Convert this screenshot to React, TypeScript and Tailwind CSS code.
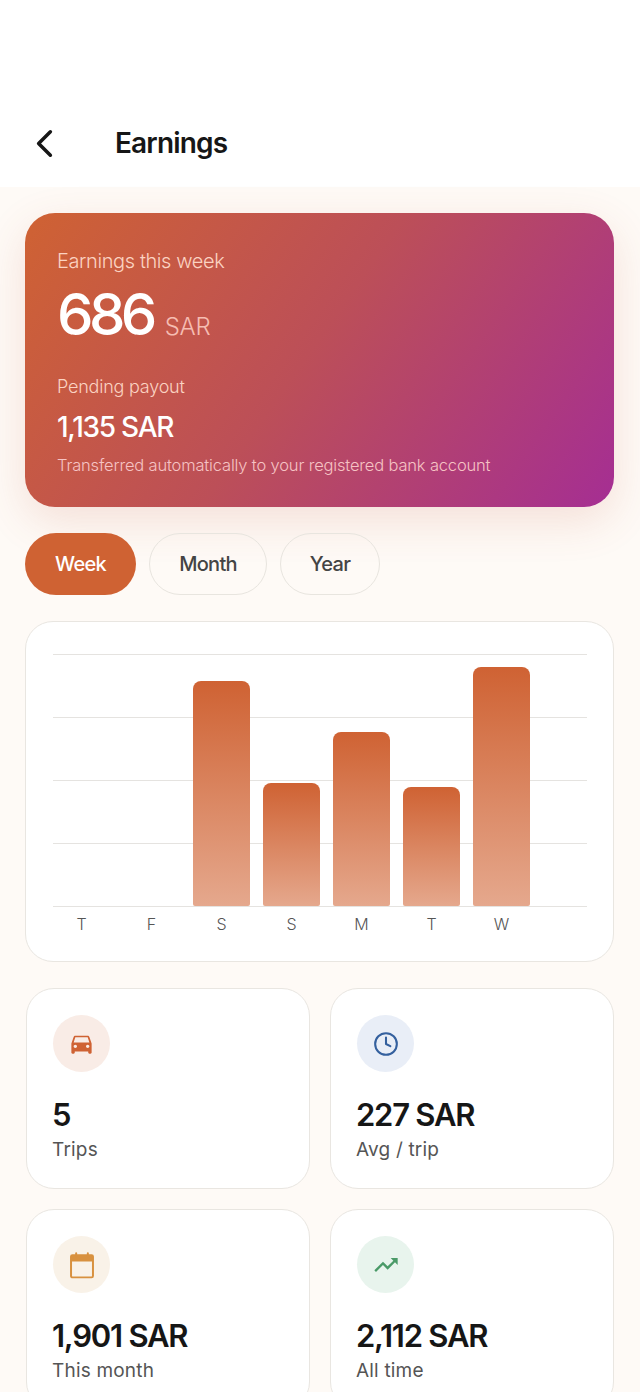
import { ChevronLeft, Clock } from 'lucide-react'
import { MdDirectionsCar, MdTrendingUp } from 'react-icons/md'

const days = [
  { label: 'T', height: 0 },
  { label: 'F', height: 0 },
  { label: 'S', height: 225 },
  { label: 'S', height: 123 },
  { label: 'M', height: 174 },
  { label: 'T', height: 119 },
  { label: 'W', height: 239 },
]

function CalendarIcon() {
  return (
    <svg viewBox="0 0 24 24" className="h-[28px] w-[28px]" fill="none">
      <rect x="2.6" y="3.6" width="18.8" height="19" rx="1.2" stroke="#d8913f" strokeWidth="1.7" />
      <path d="M2.6 4.8A1.2 1.2 0 0 1 3.8 3.6h16.4a1.2 1.2 0 0 1 1.2 1.2V9H2.6z" fill="#d8913f" />
      <path d="M7 2v2.5M17 2v2.5" stroke="#d8913f" strokeWidth="1.7" strokeLinecap="round" />
    </svg>
  )
}

function StatCard({ icon, tint, value, label }: { icon: React.ReactNode; tint: string; value: string; label: string }) {
  return (
    <div className="h-[201px] rounded-[28px] border border-[#e9e6e1] bg-white px-[26px] pt-[26px]">
      <div className={`flex h-[57px] w-[57px] items-center justify-center rounded-full ${tint}`}>{icon}</div>
      <div className="mt-[23px] -ml-px text-[31px] leading-[40px] font-semibold tracking-[-0.04em] text-[#161616]">{value}</div>
      <div className="mt-[1px] -ml-px text-[19px] leading-[28px] tracking-[0.01em] text-[#555]">{label}</div>
    </div>
  )
}

export default function App() {
  return (
    <div className="h-[1392px] overflow-hidden bg-[#fefaf6] font-['Inter',sans-serif]">
      <header className="flex h-[187px] items-end bg-white pb-[22px]">
        <div className="flex h-[44px] items-center">
          <ChevronLeft className="ml-[21px] h-[47px] w-[47px] text-[#161616]" strokeWidth={1.8} />
          <h1 className="ml-[47px] text-[28px] font-semibold tracking-[-0.03em] text-[#161616]">Earnings</h1>
        </div>
      </header>

      <main className="pt-[26px] pr-[26px] pl-[25px]">
        <section className="h-[294px] rounded-[30px] bg-[linear-gradient(125deg,#cf6233_0%,#bc4f58_48%,#a52e93_100%)] px-[32px] pt-[34px] shadow-[0_14px_44px_rgba(190,90,60,0.16)]">
          <div className="text-[20px] leading-[28px] font-light tracking-[-0.02em] text-[#fbd3c2]">Earnings this week</div>
          <div className="mt-[4px] flex items-baseline">
            <span className="text-[58px] leading-[70px] font-medium tracking-[-0.08em] text-white">686</span>
            <span className="ml-[12px] text-[24px] font-light tracking-[-0.01em] text-[#f6bdb2]">SAR</span>
          </div>
          <div className="mt-[24px] text-[18px] leading-[28px] font-light tracking-[-0.012em] text-[#fbd3c2]">Pending payout</div>
          <div className="mt-[8px] text-[28px] leading-[36px] font-medium tracking-[-0.045em] text-white">1,135 SAR</div>
          <div className="mt-[7px] text-[16.5px] leading-[26px] font-light tracking-[-0.01em] whitespace-nowrap text-[#f6c3c4]">
            Transferred automatically to your registered bank account
          </div>
        </section>

        <div className="mt-[26px] flex gap-[13px]">
          <button className="h-[62px] w-[111px] rounded-full bg-[#cf6233] text-[20px] font-medium tracking-[-0.035em] text-white">Week</button>
          <button className="h-[62px] w-[118px] rounded-full border border-[#e8e5df] text-[20px] font-medium tracking-[-0.035em] text-[#444]">Month</button>
          <button className="h-[62px] w-[100px] rounded-full border border-[#e8e5df] text-[20px] font-medium tracking-[-0.035em] text-[#444]">Year</button>
        </div>

        <section className="mt-[26px] h-[341px] rounded-[28px] border border-[#e9e6e1] bg-white pt-[32px] pr-[26px] pl-[27px]">
          <div className="relative h-[253px]">
            <div className="absolute inset-0 flex flex-col justify-between">
              {[0, 1, 2, 3, 4].map(i => (
                <div key={i} className="h-px bg-[#e5e3e0]" />
              ))}
            </div>
            <div className="relative flex h-full items-end gap-[13px] pb-px">
              {days.map((d, i) => (
                <div
                  key={i}
                  className="w-[57px] rounded-t-[8px] rounded-b-[2px] bg-[linear-gradient(180deg,#cf6233,#e5a88d)]"
                  style={{ height: d.height }}
                />
              ))}
            </div>
          </div>
          <div className="mt-[5px] flex gap-[13px]">
            {days.map((d, i) => (
              <div key={i} className="w-[57px] text-center text-[16px] leading-[24px] font-light text-[#555]">
                {d.label}
              </div>
            ))}
          </div>
        </section>

        <div className="mt-[26px] grid grid-cols-2 gap-x-[20px] gap-y-[20px] pl-px">
          <StatCard icon={<MdDirectionsCar className="h-[27px] w-[27px] text-[#cf6233]" />} tint="bg-[#f9ece6]" value="5" label="Trips" />
          <StatCard icon={<Clock className="h-[26px] w-[26px] text-[#34609e]" strokeWidth={1.9} />} tint="bg-[#e9eef7]" value="227 SAR" label="Avg / trip" />
          <StatCard icon={<CalendarIcon />} tint="bg-[#f9f2e8]" value="1,901 SAR" label="This month" />
          <StatCard icon={<MdTrendingUp className="h-[28px] w-[28px] text-[#4a9a68]" />} tint="bg-[#e8f4ed]" value="2,112 SAR" label="All time" />
        </div>
      </main>
    </div>
  )
}
